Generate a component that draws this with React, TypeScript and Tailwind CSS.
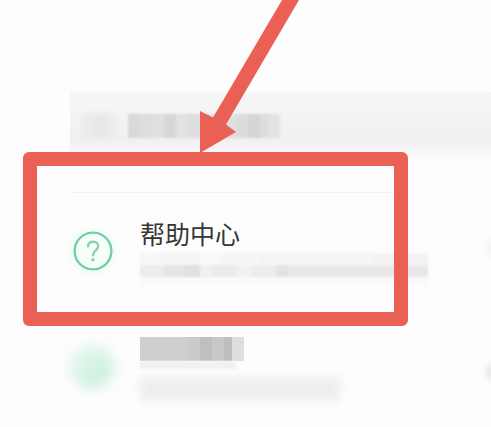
import { clsx } from "clsx";

type Cell = { w: string; color: string };

const searchIcon: Cell[] = [
  { w: "w-3", color: "bg-[#ebebeb]" },
  { w: "w-3", color: "bg-[#e7e7e7]" },
  { w: "w-2.5", color: "bg-[#ececec]" },
];

const searchText: Cell[] = [
  { w: "w-3", color: "bg-[#d9d9d9]" },
  { w: "w-3", color: "bg-[#dddddd]" },
  { w: "w-3", color: "bg-[#e0e0e0]" },
  { w: "w-3", color: "bg-[#d7d7d7]" },
  { w: "w-3", color: "bg-[#e2e2e2]" },
  { w: "w-9", color: "bg-[#dedede]" },
  { w: "w-3", color: "bg-[#e0e0e0]" },
  { w: "w-3", color: "bg-[#dcdcdc]" },
  { w: "w-3", color: "bg-[#d5d5d5]" },
  { w: "w-2", color: "bg-[#dddddd]" },
  { w: "w-3", color: "bg-[#e3e3e3]" },
];

const helpTop: Cell[] = [
  { w: "w-5", color: "bg-[#f7f7f7]" },
  { w: "w-10", color: "bg-[#f4f4f4]" },
  { w: "w-5", color: "bg-[#f9f9f9]" },
  { w: "w-10", color: "bg-[#f6f6f6]" },
  { w: "w-12", color: "bg-[#f4f4f4]" },
  { w: "w-16", color: "bg-[#f5f5f5]" },
  { w: "w-20", color: "bg-[#f3f3f3]" },
];

const helpMain: Cell[] = [
  { w: "w-6", color: "bg-[#ececec]" },
  { w: "w-5", color: "bg-[#e5e5e5]" },
  { w: "w-4", color: "bg-[#e0e0e0]" },
  { w: "w-3", color: "bg-[#f0f0f0]" },
  { w: "w-6", color: "bg-[#ebebeb]" },
  { w: "w-4", color: "bg-[#f1f1f1]" },
  { w: "w-6", color: "bg-[#ececec]" },
  { w: "w-3", color: "bg-[#e2e2e2]" },
  { w: "w-12", color: "bg-[#e8e8e8]" },
  { w: "w-24", color: "bg-[#e8e8e8]" },
  { w: "w-3", color: "bg-[#ededed]" },
  { w: "w-3", color: "bg-[#f4f4f4]" },
];

const nextTitle: Cell[] = [
  { w: "w-12", color: "bg-[#cfcfcf]" },
  { w: "w-3", color: "bg-[#cbcbcb]" },
  { w: "w-3", color: "bg-[#bfbfbd]" },
  { w: "w-3", color: "bg-[#c8c8c7]" },
  { w: "w-2", color: "bg-[#bebebd]" },
  { w: "w-3", color: "bg-[#dedede]" },
];

function Mosaic({ cells, className }: { cells: Cell[]; className?: string }) {
  return (
    <span aria-hidden="true" className={clsx("flex overflow-hidden", className)}>
      {cells.map((cell, i) => (
        <span key={i} className={clsx("h-full shrink-0", cell.w, cell.color)} />
      ))}
    </span>
  );
}

function HelpIcon() {
  return (
    <svg
      viewBox="0 0 40 40"
      fill="none"
      strokeLinecap="round"
      className="size-10 shrink-0 rounded-full bg-[#f4fffa] shadow-[0_0_8px_#d9ffec]"
    >
      <circle cx="20" cy="20" r="18.4" stroke="#75cda4" strokeWidth="2.4" />
      <path
        d="M15 15.4c.2-3 2.2-4.6 5-4.6s5.2 1.7 5.2 4.5c0 2-1.2 3.1-2.6 4.3-1.7 1.4-2.6 2.4-2.6 4.7"
        stroke="#8fcfb0"
        strokeWidth="2.4"
      />
      <circle cx="20" cy="28.7" r="1.7" fill="#92cfb1" />
    </svg>
  );
}

/* red frame and arrow drawn over the list */
function Annotation() {
  return (
    <>
      <div className="pointer-events-none absolute top-[152px] right-[83px] left-[23px] h-[174px] rounded-md border-14 border-[#eb6055]" />
      <svg
        viewBox="0 0 100 154"
        fill="#eb6055"
        className="pointer-events-none absolute top-0 left-[200px] h-[154px] w-[100px]"
      >
        <path d="M82 0H99L26 124.5 36 132 0 153V111L13 117.5Z" />
      </svg>
    </>
  );
}

export default function App() {
  return (
    <main className="relative min-h-screen overflow-hidden bg-[#fdfdfd] pt-[92px] pl-[70px] font-['Noto_Sans_CJK_SC',sans-serif]">
      <div className="flex h-[68px] items-center gap-3 bg-linear-to-b from-[#f7f7f7] from-0% via-[#f0f0f0] via-70% to-[#fafafa] pl-3">
        <Mosaic cells={searchIcon} className="h-6 blur-[2px]" />
        <Mosaic cells={searchText} className="h-6 blur-[1px]" />
      </div>

      <ul className="mt-8 mr-[83px] border-t border-[#f3f3f3]">
        <li>
          <button type="button" className="flex w-full items-center gap-6 pt-6 pl-[3px] text-left">
            <HelpIcon />
            <span className="w-0 grow pl-[3px]">
              <span className="block text-[25px] leading-8 text-[#353535]">帮助中心</span>
              <span className="block w-72 pt-1">
                <Mosaic cells={helpTop} className="h-3 blur-[1px]" />
                <Mosaic cells={helpMain} className="h-3 blur-[1px]" />
                <span className="block h-2 bg-[#fafafa]" />
              </span>
            </span>
          </button>
        </li>
        <li className="flex gap-6 pt-[52px]">
          <span className="mt-2 size-11 shrink-0 rounded-full bg-linear-to-br from-[#e6f9ef] to-[#c6edd9] blur-[6px]" />
          <div className="grow pl-0.5">
            <Mosaic cells={nextTitle} className="h-6" />
            <div className="h-2 w-24 bg-[#f1f1f1] blur-[1px]" />
            <div className="mt-2 h-6 w-50 bg-[#eeeeee] blur-[4px]" />
          </div>
        </li>
      </ul>

      {/* blurred ends of the rows */}
      <span className="absolute top-[240px] -right-1 h-4 w-2 bg-[#f3f3f3] blur-[3px]" />
      <span className="absolute top-[364px] -right-1 h-4 w-2 bg-[#e6e6e6] blur-[3px]" />

      <Annotation />
    </main>
  );
}
